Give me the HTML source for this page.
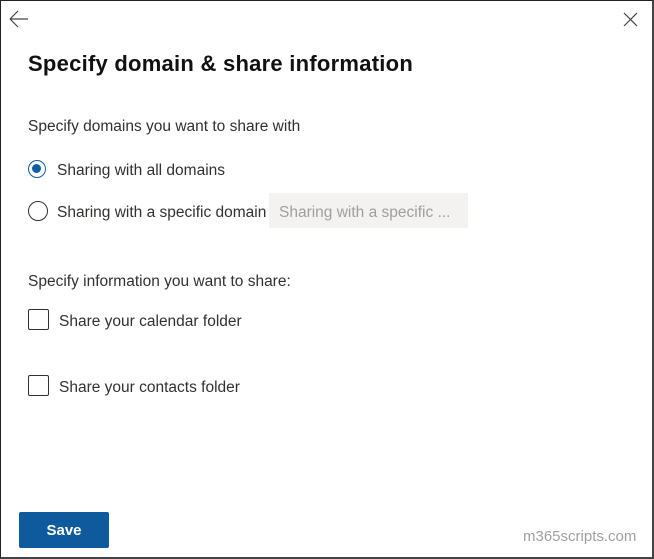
<!DOCTYPE html><html><head><style>
body{margin:0;width:654px;height:559px;overflow:hidden;font-family:"Liberation Sans",sans-serif;background:#fff}
.f{position:absolute;left:0;top:0;width:651px;height:556px;border:1px solid #222;border-right:2px solid #444;border-bottom:2px solid #444;box-sizing:content-box}
.a{position:absolute;white-space:nowrap}
.t{font-size:15.5px;color:#323130}
.r{position:absolute;width:18px;height:18px;border:1.5px solid #323130;border-radius:50%;box-sizing:border-box}
.c{position:absolute;width:21px;height:21px;border:1.5px solid #323130;border-radius:2px;box-sizing:border-box}
</style></head><body><div class="f"></div>
<svg class="a" style="left:9px;top:10px" width="20" height="18"><path d="M1 9H19M1 9L9 1M1 9L9 17" stroke="#444" stroke-width="1.2" fill="none"/></svg>
<svg class="a" style="left:623px;top:12px" width="15" height="15"><path d="M1 1L14 14M14 1L1 14" stroke="#444" stroke-width="1.2"/></svg>
<div class="a" style="left:28px;top:51px;font-size:22px;font-weight:bold;color:#111;letter-spacing:0.25px">Specify domain &amp; share information</div>
<div class="a t" style="left:28px;top:118px">Specify domains you want to share with</div>
<div class="r" style="left:28px;top:160px;border-color:#0f5ea3"><div style="position:absolute;left:3px;top:3px;width:9px;height:9px;border-radius:50%;background:#0f5ea3"></div></div>
<div class="a t" style="left:57px;top:162px">Sharing with all domains</div>
<div class="r" style="left:28px;width:20px;height:20px;top:201px"></div>
<div class="a t" style="left:57px;top:204px">Sharing with a specific domain</div>
<div class="a" style="left:269px;top:193px;width:199px;height:35px;background:#f3f2f1"></div>
<div class="a" style="left:279px;top:204px;font-size:15.5px;color:#a19f9d">Sharing with a specific ...</div>
<div class="a t" style="left:28px;top:273px">Specify information you want to share:</div>
<div class="c" style="left:28px;top:309px"></div>
<div class="a t" style="left:59px;top:313px">Share your calendar folder</div>
<div class="c" style="left:28px;top:375px"></div>
<div class="a t" style="left:59px;top:379px">Share your contacts folder</div>
<div class="a" style="left:19px;top:512px;width:90px;height:36px;background:#0f5a9c;border-radius:2px;color:#fff;font-weight:bold;font-size:15px;text-align:center;line-height:38px">Save</div>
<div class="a" style="left:523px;top:528px;font-size:15px;color:#a0a0a0">m365scripts.com</div>
</body></html>
